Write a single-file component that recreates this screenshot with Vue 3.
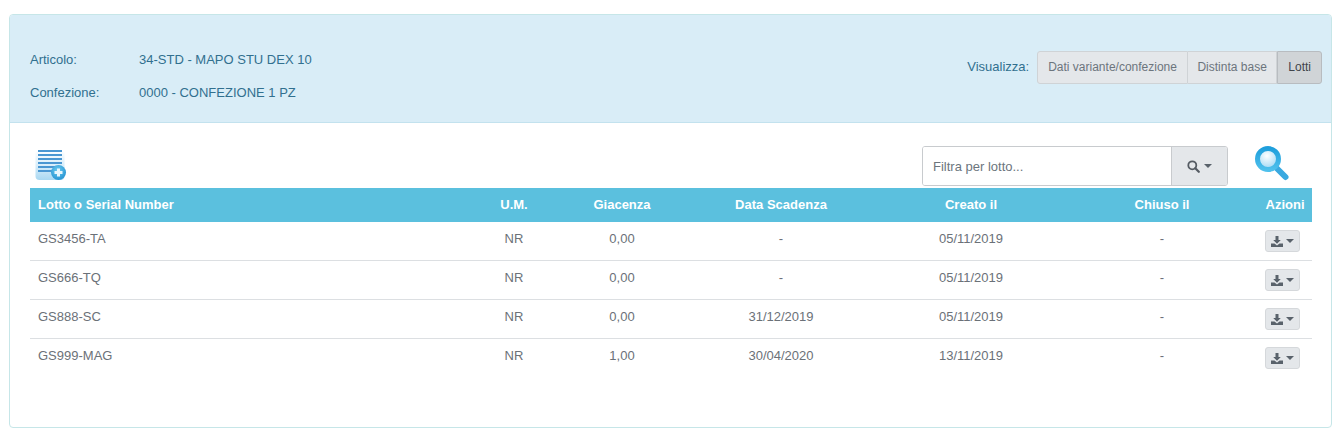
<script setup>
const righe = [
  { lotto: 'GS3456-TA', um: 'NR', giacenza: '0,00', scadenza: '-', creato: '05/11/2019', chiuso: '-' },
  { lotto: 'GS666-TQ', um: 'NR', giacenza: '0,00', scadenza: '-', creato: '05/11/2019', chiuso: '-' },
  { lotto: 'GS888-SC', um: 'NR', giacenza: '0,00', scadenza: '31/12/2019', creato: '05/11/2019', chiuso: '-' },
  { lotto: 'GS999-MAG', um: 'NR', giacenza: '1,00', scadenza: '30/04/2020', creato: '13/11/2019', chiuso: '-' },
]
</script>

<template>
  <div class="page">
    <div class="card">
      <div class="head">
        <div class="info">
          <div class="info-row"><span class="lbl">Articolo:</span><span>34-STD - MAPO STU DEX 10</span></div>
          <div class="info-row"><span class="lbl">Confezione:</span><span>0000 - CONFEZIONE 1 PZ</span></div>
        </div>
        <div class="view">
          <span class="view-lbl">Visualizza:</span>
          <div class="btn-group">
            <button class="seg">Dati variante/confezione</button>
            <button class="seg">Distinta base</button>
            <button class="seg active">Lotti</button>
          </div>
        </div>
      </div>

      <div class="body">
        <div class="toolbar">
          <svg class="add-icon" width="32" height="33" viewBox="0 0 32 33">
            <defs>
              <linearGradient id="sheet" x1="0" y1="0" x2="0" y2="1">
                <stop offset="0" stop-color="#ffffff" />
                <stop offset="0.5" stop-color="#d9eefa" />
                <stop offset="1" stop-color="#a9d8f2" />
              </linearGradient>
              <radialGradient id="plusbg" cx="0.45" cy="0.35" r="0.7">
                <stop offset="0" stop-color="#6ccbf0" />
                <stop offset="1" stop-color="#2290d0" />
              </radialGradient>
            </defs>
            <rect x="0.500" y="2" width="29" height="30" rx="4" fill="url(#sheet)" />
            <g fill="#4a97d2">
              <rect x="3" y="2" width="24" height="2" />
              <rect x="3" y="6" width="24" height="2" />
              <rect x="3" y="10" width="24" height="2" />
              <rect x="3" y="14" width="24" height="2" />
              <rect x="3" y="18" width="24" height="2" />
              <rect x="3" y="22" width="15" height="2" />
            </g>
            <circle cx="23.500" cy="24.500" r="7.500" fill="url(#plusbg)" />
            <path d="M22 20.500h3v2.500h2.500v3h-2.500v2.500h-3v-2.500h-2.500v-3h2.500z" fill="#e8f6fd" />
          </svg>

          <div class="search">
            <input class="search-input" type="text" placeholder="Filtra per lotto..." />
            <button class="search-btn">
              <svg width="13" height="13" viewBox="0 0 13 13">
                <circle cx="5.300" cy="5.300" r="4" fill="none" stroke="#555c63" stroke-width="1.800" />
                <path d="M8.300 8.300l3.500 3.500" stroke="#555c63" stroke-width="2.200" stroke-linecap="round" />
              </svg>
              <span class="caret"></span>
            </button>
          </div>

          <svg class="lens" width="38" height="38" viewBox="0 0 38 38">
            <defs>
              <radialGradient id="glass" cx="0.45" cy="0.35" r="0.65">
                <stop offset="0" stop-color="#ffffff" />
                <stop offset="1" stop-color="#9ed6f3" />
              </radialGradient>
              <linearGradient id="ring" x1="0" y1="0" x2="0" y2="1">
                <stop offset="0" stop-color="#1f9fdc" />
                <stop offset="1" stop-color="#4fc0ec" />
              </linearGradient>
            </defs>
            <path d="M22.500 23l9 9" stroke="#3aa9e0" stroke-width="6" stroke-linecap="round" />
            <circle cx="14" cy="14" r="10.500" fill="url(#glass)" stroke="url(#ring)" stroke-width="5" />
          </svg>
        </div>

        <div class="row th">
          <div class="c-lotto">Lotto o Serial Number</div>
          <div>U.M.</div>
          <div>Giacenza</div>
          <div>Data Scadenza</div>
          <div>Creato il</div>
          <div>Chiuso il</div>
          <div>Azioni</div>
        </div>
        <div v-for="r in righe" :key="r.lotto" class="row td">
          <div class="c-lotto">{{ r.lotto }}</div>
          <div>{{ r.um }}</div>
          <div>{{ r.giacenza }}</div>
          <div>{{ r.scadenza }}</div>
          <div>{{ r.creato }}</div>
          <div>{{ r.chiuso }}</div>
          <div class="c-act">
            <button class="act">
              <svg width="12" height="11" viewBox="0 0 12 11">
                <path d="M4.500 0h3v4h2.300L6 7.800 2.200 4h2.300z" fill="#59626b" />
                <path d="M0 7.500h3.500L6 9.500l2.500-2H12V11H0z" fill="#59626b" />
              </svg>
              <span class="caret"></span>
            </button>
          </div>
        </div>
      </div>
    </div>
  </div>
</template>

<style>
html, body {
  background: #fff;
}
</style>

<style scoped>
.page {
  padding: 14px 9px 13px 9px;
  width: 1341px;
  height: 441px;
  box-sizing: border-box;
  font-family: "Liberation Sans", Arial, sans-serif;
  font-size: 13px;
}
.card {
  height: 100%;
  box-sizing: border-box;
  border: 1px solid #c6e6e8;
  border-radius: 4px;
  overflow: hidden;
}
.head {
  height: 108px;
  box-sizing: border-box;
  background: #d9edf7;
  border-bottom: 1px solid #c3e2ee;
  padding: 0 9px 0 20px;
  display: flex;
  justify-content: space-between;
  align-items: center;
  color: #31708f;
}
.info {
  display: flex;
  flex-direction: column;
  gap: 18px;
  padding-top: 14px;
}
.info-row {
  display: flex;
  line-height: 15px;
}
.lbl {
  width: 109px;
}
.view {
  display: flex;
  align-items: center;
  gap: 8px;
  margin-top: -3px;
}
.view-lbl {
  padding-bottom: 2px;
}
.btn-group {
  display: flex;
}
.seg {
  height: 33px;
  box-sizing: border-box;
  padding: 0 10px;
  font: 12px "Liberation Sans", Arial, sans-serif;
  color: #6c757d;
  background: #e4e7ea;
  border: 1px solid #cfd3d6;
  border-left: 0;
}
.seg:first-child {
  border-left: 1px solid #cfd3d6;
  border-radius: 3px 0 0 3px;
}
.seg:nth-child(2) {
  padding: 0 9.500px;
}
.seg:last-child {
  border-radius: 0 3px 3px 0;
}
.seg.active {
  color: #3f454b;
  background: #d0d4d7;
  border-color: #b8bcc0;
  border-left: 1px solid #b8bcc0;
}
.body {
  padding: 0 19px 0 20px;
}
.toolbar {
  height: 65px;
  display: flex;
  align-items: flex-end;
  position: relative;
  padding-bottom: 3px;
  box-sizing: border-box;
}
.add-icon {
  margin: 0 0 4px 5px;
}
.search {
  margin-left: auto;
  margin-right: 26px;
  width: 306px;
  height: 40px;
  display: flex;
  box-sizing: border-box;
  border: 1px solid #c8cbce;
  border-radius: 3px;
  overflow: hidden;
  margin-bottom: -1px;
}
.search-input {
  flex: 1;
  min-width: 0;
  border: 0;
  outline: 0;
  padding: 0 10px;
  font: 13px "Liberation Sans", Arial, sans-serif;
  color: #495057;
}
.search-input::placeholder {
  color: #6c757d;
  opacity: 1;
}
.search-btn {
  width: 56px;
  background: #e4e7ea;
  border: 0;
  border-left: 1px solid #c8cbce;
  display: flex;
  align-items: center;
  justify-content: center;
  gap: 4px;
  padding: 0;
}
.lens {
  margin: 0 20px 2px 0;
}
.caret {
  width: 0;
  height: 0;
  border-left: 4px solid transparent;
  border-right: 4px solid transparent;
  border-top: 4px solid #59626b;
}
.row {
  display: grid;
  grid-template-columns: 440px 88px 128px 190px 190px 192px 54px;
  align-items: center;
  text-align: center;
}
.c-lotto {
  text-align: left;
  padding-left: 8px;
}
.th {
  height: 34px;
  padding-bottom: 2px;
  box-sizing: border-box;
  background: #5bc0de;
  color: #fff;
  font-weight: 700;
  font-size: 13px;
}
.td {
  height: 39px;
  color: #6b7178;
  border-bottom: 1px solid #dcdfe2;
  box-sizing: border-box;
  padding-bottom: 5px;
}
.td:last-child {
  border-bottom-color: transparent;
}
.c-act {
  display: flex;
  justify-content: flex-start;
  padding: 5px 0 0 7px;
}
.act {
  width: 35px;
  height: 22px;
  box-sizing: border-box;
  background: #e4e7ea;
  border: 1px solid #d5d8db;
  border-radius: 3px;
  display: flex;
  align-items: center;
  justify-content: center;
  gap: 3px;
  padding: 0;
}
</style>
